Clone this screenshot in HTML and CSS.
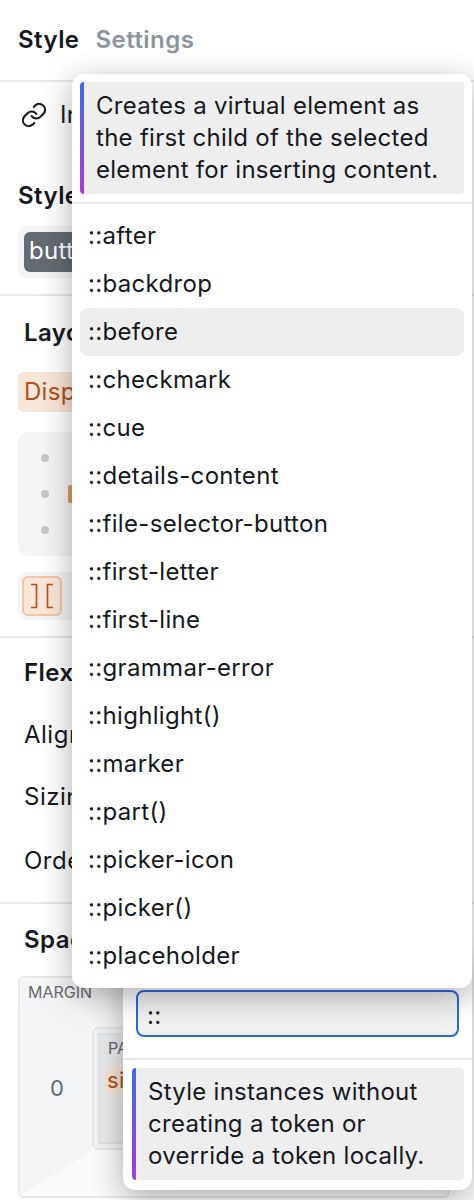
FILE: index.html
```html
<!DOCTYPE html>
<html lang="en">
<head>
<meta charset="utf-8">
<title>Style panel</title>
<link rel="stylesheet" href="styles.css">
</head>
<body>
<div class="panel">
  <header class="tabs"><span class="tab active">Style</span><span class="tab">Settings</span></header>
  <section class="instance">
    <svg class="link-icon" viewBox="0 0 24 24" fill="none" stroke="#15191e" stroke-width="1.8" stroke-linecap="round" stroke-linejoin="round"><path d="M10 13a5 5 0 0 0 7.500.5l3-3a5 5 0 0 0-7-7l-1.700 1.700"/><path d="M14 11a5 5 0 0 0-7.500-.5l-3 3a5 5 0 0 0 7 7l1.700-1.700"/></svg>
    <span>Instance</span>
  </section>
  <section class="sources">
    <h2 class="title">Style sources</h2>
    <div class="source-field"><span class="source-chip">button</span></div>
  </section>
  <section class="layout">
    <h2 class="title">Layout</h2>
    <span class="display-chip">Display</span>
    <div class="align-box">
      <div class="dot-row"><i class="dot"></i></div>
      <div class="dot-row"><i class="dot"></i><i class="mark"></i></div>
      <div class="dot-row"><i class="dot"></i></div>
    </div>
    <div class="button-row">
      <span class="gap-btn"><svg viewBox="0 0 24 26" fill="none" stroke="#b5521f" stroke-width="1.7"><path d="M1 1.500h5.500v23H1M23 1.500h-5.500v23H23"/></svg></span>
    </div>
  </section>
  <section class="flex">
    <h2 class="title">Flex Child</h2>
    <div class="prop p-align">Align</div>
    <div class="prop p-sizing">Sizing</div>
    <div class="prop p-order">Order</div>
  </section>
  <section class="spacing">
    <h2 class="title">Spacing</h2>
    <div class="margin-outer">
      <span class="box-label margin-label">MARGIN</span>
      <span class="margin-value">0</span>
      <div class="margin-box">
        <div class="padding-box">
          <div class="padding-inner">
            <span class="padding-label">PADDING</span>
            <span class="size-chip">size</span>
          </div>
        </div>
      </div>
    </div>
  </section>

  <div class="popover token-pop">
    <div class="input-wrap"><div class="fake-input">::</div></div>
    <div class="desc-wrap">
      <p class="desc">Style instances without creating a token or override a token locally.</p>
    </div>
  </div>

  <div class="popover menu">
    <div class="desc-wrap top">
      <p class="desc">Creates a virtual element as the first child of the selected element for inserting content.</p>
    </div>
    <ul class="list">
      <li>::after</li>
      <li>::backdrop</li>
      <li class="on">::before</li>
      <li>::checkmark</li>
      <li>::cue</li>
      <li>::details-content</li>
      <li>::file-selector-button</li>
      <li>::first-letter</li>
      <li>::first-line</li>
      <li>::grammar-error</li>
      <li>::highlight()</li>
      <li>::marker</li>
      <li>::part()</li>
      <li>::picker-icon</li>
      <li>::picker()</li>
      <li>::placeholder</li>
    </ul>
  </div>
</div>
</body>
</html>
```
FILE: styles.css
```css
* { box-sizing: border-box; }
html, body { margin: 0; padding: 0; background: #fff; }
body { font-family: Inter, "Liberation Sans", sans-serif; font-size: 24px; line-height: 32px; letter-spacing: .28px; color: #15191e; overflow: hidden; }
.panel { position: relative; width: 474px; height: 1200px; overflow: hidden; }
.tabs { display: flex; gap: 16px; height: 82px; padding: 24px 18px 0; border-bottom: 2px solid #e8e8e8; }
.tab { font-weight: 600; letter-spacing: .45px; color: #8d949c; }
.tab.active { color: #15191e; }
.instance { display: flex; align-items: center; gap: 12px; height: 66px; padding: 0 20px; }
.link-icon { width: 28px; height: 28px; flex: none; }
.title { margin: 0; font-size: 24px; line-height: 32px; font-weight: 600; letter-spacing: .45px; }
.sources { height: 148px; padding: 32px 18px 0; border-bottom: 2px solid #e8e8e8; }
.source-field { display: flex; margin-top: 14px; height: 52px; padding: 6px; background: #f5f5f5; border-radius: 8px; }
.source-chip { height: 40px; padding: 0 5px; line-height: 38px; color: #fff; background: #646b72; border-radius: 6px; }
.layout { height: 342px; padding: 21px 18px 0; border-bottom: 2px solid #e8e8e8; }
.layout .title { margin-left: 6px; }
.display-chip { display: block; width: 120px; margin-top: 23px; height: 40px; padding: 0 6px; line-height: 39px; color: #b0501d; background: #f8e6d8; border-radius: 6px; }
.align-box { margin-top: 20px; height: 124px; padding: 8px 0; background: #f5f5f5; border-radius: 10px; }
.dot-row { display: flex; align-items: center; gap: 19px; height: 36px; padding-left: 23px; }
.dot { width: 8px; height: 8px; border-radius: 50%; background: #c8c8c8; }
.mark { width: 8px; height: 18px; border-radius: 2px; background: #e09a68; }
.button-row { margin-top: 16px; height: 48px; padding: 4px; background: #f5f5f5; border-radius: 8px; }
.gap-btn { display: flex; align-items: center; justify-content: center; width: 40px; height: 40px; background: #f8e6d8; border: 2px solid #f0c6a6; border-radius: 6px; }
.gap-btn svg { width: 24px; height: 26px; flex: none; }
.flex { height: 266px; padding: 19px 24px 0; border-bottom: 2px solid #e8e8e8; }
.prop { letter-spacing: .5px; }
.p-align { margin-top: 30px; }
.p-sizing { margin-top: 30px; }
.p-order { margin-top: 32px; }
.spacing { padding: 20px 18px 0; }
.spacing .title { margin-left: 6px; }
.margin-outer { position: relative; width: 432px; height: 222px; margin-top: 20px; border: 2px solid #e8e9ea; border-radius: 6px; overflow: hidden; }
.margin-box { height: 218px; border-style: solid; border-color: #f7f7f7 #f3f4f6 #fafafa #f3f4f6; border-width: 49px 74px 46px 72px; }
.padding-box { height: 123px; padding: 4px; border: 2px solid #e4e6e7; border-radius: 6px; background: #f1f2f3; }
.padding-inner { height: 111px; padding: 0 6px; background: #e9ebec; border: 2px solid #e0e2e3; }
.box-label, .padding-label { font-size: 16px; line-height: 20px; letter-spacing: 0; color: #646b72; }
.margin-label { position: absolute; left: 8px; top: 4px; }
.margin-value { position: absolute; left: 30px; top: 94px; font-size: 22px; color: #646b72; }
.padding-label { display: block; margin-top: 3px; margin-left: 2px; }
.size-chip { display: inline-block; margin-top: 9px; margin-left: -1px; padding: 0 2px; height: 28px; font-size: 22px; line-height: 27px; color: #b0501d; background: #f8e6d8; border-radius: 6px; }
.popover { position: absolute; background: #fff; box-shadow: 0 8px 32px rgba(0,0,0,.32); }
.token-pop { left: 123px; top: 960px; width: 349px; height: 230px; border-radius: 0 0 12px 12px; }
.input-wrap { height: 100px; padding: 30px 13px 0 13px; border-bottom: 2px solid #e8e8e8; }
.fake-input { height: 47px; padding: 0 9px; line-height: 47px; border: 2px solid #2f66e0; border-radius: 8px; background: #f2f2f2; }
.token-pop .desc-wrap { padding: 8px 8px 8px 9px; }
.menu { left: 72px; top: 74px; width: 400px; height: 914px; border-radius: 12px; }
.desc-wrap.top { padding: 8px; border-bottom: 2px solid #e8e8e8; height: 130px; }
.desc { margin: 0; min-height: 112px; padding: 8px 12px 8px 16px; background: linear-gradient(#3f68ee, #a63fd6) left top / 4px 100% no-repeat, #eeeeee; border-radius: 4px; }
.list { margin: 0; padding: 8px; list-style: none; letter-spacing: .33px; }
.list li { height: 48px; padding: 0 8px; line-height: 47px; border-radius: 8px; }
.list li.on { background: #eeeeee; }
```
